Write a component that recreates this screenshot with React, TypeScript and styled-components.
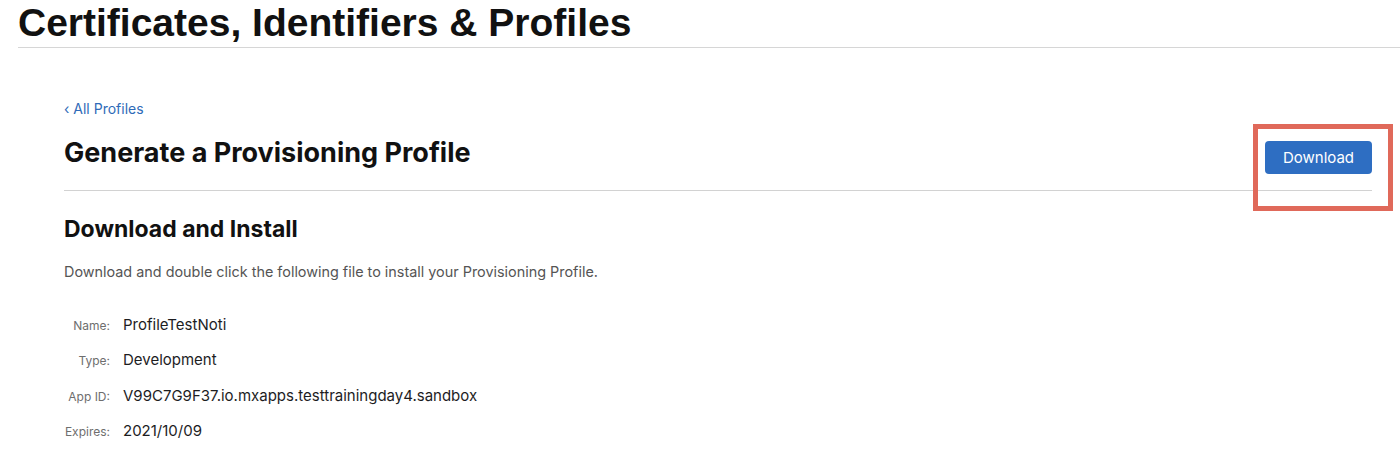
import React from "react";
import styled, { createGlobalStyle } from "styled-components";

const Global = createGlobalStyle`
  html, body { margin: 0; padding: 0; background: #fff; }
  body { font-family: Inter, "Noto Sans", sans-serif; color: #1d1d1f; }
`;

const Page = styled.div`
  width: 1400px;
  height: 453px;
  overflow: hidden;
  background: #fff;
`;

const Header = styled.header`
  margin-left: 18px;
  height: 47px;
  border-bottom: 1px solid #d6d6d6;
  display: flex;
  align-items: flex-start;
`;

const SiteTitle = styled.h1`
  margin: 0;
  padding-top: 1px;
  font-family: "Liberation Sans", Arial, sans-serif;
  font-weight: 700;
  font-size: 39px;
  line-height: 44px;
  letter-spacing: 0;
  color: #111;
`;

const Content = styled.main`
  padding: 0 28px 0 64px;
`;

const BackLink = styled.a`
  display: inline-block;
  margin-top: 52px;
  font-size: 14px;
  line-height: 17px;
  color: #2f6bb8;
  text-decoration: none;
`;

const TitleRow = styled.div`
  display: flex;
  align-items: flex-start;
  justify-content: space-between;
  margin-top: 18px;
  padding-bottom: 16px;
  border-bottom: 1px solid #d2d2d2;
`;

const PageTitle = styled.h2`
  margin: 0;
  font-size: 27px;
  line-height: 34px;
  font-weight: 700;
  color: #111;
`;

const ButtonWrap = styled.div`
  position: relative;
  margin-top: 5px;
`;

const DownloadButton = styled.button`
  display: block;
  width: 107px;
  height: 33px;
  border: none;
  border-radius: 4px;
  background: #2e6ec2;
  color: #fff;
  font-family: Inter, sans-serif;
  font-size: 15px;
  cursor: pointer;
`;

const Highlight = styled.div`
  position: absolute;
  left: -12px;
  top: -17px;
  width: 140px;
  height: 87px;
  box-sizing: border-box;
  border: 5px solid #e0695a;
  pointer-events: none;
`;

const SectionTitle = styled.h3`
  margin: 23px 0 0;
  font-size: 23px;
  line-height: 30px;
  font-weight: 700;
  color: #111;
`;

const Intro = styled.p`
  margin: 19px 0 0;
  font-size: 14.4px;
  line-height: 18px;
  color: #555;
`;

const Details = styled.dl`
  margin: 34px 0 0;
  display: grid;
  grid-template-columns: 46px auto;
  column-gap: 13px;
  row-gap: 14.4px;
  align-items: baseline;
`;

const Label = styled.dt`
  text-align: right;
  font-size: 12px;
  line-height: 20px;
  color: #6e6e6e;
  white-space: nowrap;
`;

const Value = styled.dd`
  margin: 0;
  font-size: 15px;
  line-height: 20px;
  color: #1d1d1f;
`;

const rows: [string, string][] = [
  ["Name:", "ProfileTestNoti"],
  ["Type:", "Development"],
  ["App ID:", "V99C7G9F37.io.mxapps.testtrainingday4.sandbox"],
  ["Expires:", "2021/10/09"],
];

export default function App() {
  return (
    <Page>
      <Global />
      <Header>
        <SiteTitle>Certificates, Identifiers &amp; Profiles</SiteTitle>
      </Header>
      <Content>
        <BackLink href="#">‹ All Profiles</BackLink>
        <TitleRow>
          <PageTitle>Generate a Provisioning Profile</PageTitle>
          <ButtonWrap>
            <DownloadButton>Download</DownloadButton>
            <Highlight />
          </ButtonWrap>
        </TitleRow>
        <SectionTitle>Download and Install</SectionTitle>
        <Intro>Download and double click the following file to install your Provisioning Profile.</Intro>
        <Details>
          {rows.map(([k, v]) => (
            <React.Fragment key={k}>
              <Label>{k}</Label>
              <Value>{v}</Value>
            </React.Fragment>
          ))}
        </Details>
      </Content>
    </Page>
  );
}
